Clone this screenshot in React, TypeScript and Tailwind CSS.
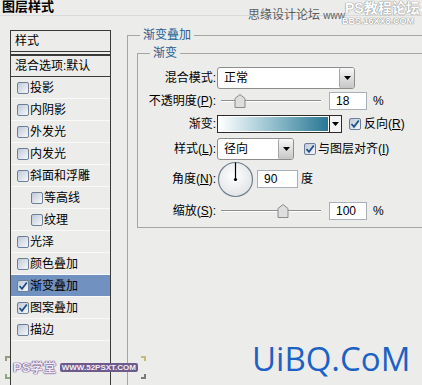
const items = [
  { label: "投影" },
  { label: "内阴影" },
  { label: "外发光" },
  { label: "内发光" },
  { label: "斜面和浮雕" },
  { label: "等高线", sub: true },
  { label: "纹理", sub: true },
  { label: "光泽" },
  { label: "颜色叠加" },
  { label: "渐变叠加", checked: true, active: true },
  { label: "图案叠加", checked: true },
  { label: "描边" },
];

function Check({ checked }: { checked?: boolean }) {
  return (
    <span className="flex h-[12px] w-[12px] shrink-0 items-center justify-center rounded-[2px] border border-[#6b7f99] bg-[linear-gradient(135deg,#bfc9d8,#f7f8fa)]">
      {checked && (
        <svg width="10" height="10" viewBox="0 0 10 10">
          <path d="M1.5 5 L4 7.8 L8.8 1.5" fill="none" stroke="#1d4f86" strokeWidth="1.8" />
        </svg>
      )}
    </span>
  );
}

function Arrow() {
  return (
    <svg width="7" height="4" viewBox="0 0 7 4">
      <path d="M0 0 H7 L3.5 4 Z" fill="#000" />
    </svg>
  );
}

function Select({ value, width }: { value: string; width: string }) {
  return (
    <div className={`flex h-[22px] ${width} items-stretch rounded-[3px] border border-[#8d8d8d] bg-white`}>
      <div className="flex-1 pl-[6px] leading-[20px]">{value}</div>
      <div className="flex w-[15px] items-center justify-center rounded-[2px] border-l border-[#a3a3a3] bg-[linear-gradient(#f8f8f8,#c6c6c6)]">
        <Arrow />
      </div>
    </div>
  );
}

function Slider({ pos }: { pos: number }) {
  return (
    <svg width="102" height="18" viewBox="0 0 102 18" className="ml-[3px] shrink-0">
      <line x1="1" y1="8.5" x2="101" y2="8.5" stroke="#8e8e8e" />
      <line x1="1" y1="9.5" x2="101" y2="9.5" stroke="#ffffff" />
      <path
        d={`M${pos} 2.5 L${pos + 5} 6.5 V15.5 H${pos - 5} V6.5 Z`}
        fill="#dedede"
        stroke="#8a8a8a"
      />
    </svg>
  );
}

function Num({ value }: { value: string }) {
  return (
    <div className="h-[18px] w-[38px] shrink-0 border border-[#a9b0b8] bg-white pl-[6px] leading-[16px]">
      {value}
    </div>
  );
}

function Label({ children }: { children: React.ReactNode }) {
  return <div className="w-[79px] shrink-0 pr-[1px] text-right">{children}</div>;
}

export default function App() {
  return (
    <div className="relative h-[385px] w-[422px] overflow-hidden bg-[#ececeb] font-['Liberation_Sans','Noto_Sans_CJK_SC',sans-serif] text-[12px] text-black">
      <div className="h-[16px] border-b border-[#d9d9d9] pl-[2px] text-[13px] font-bold leading-[14px]">图层样式</div>

      <div className="flex">
        {/* left list */}
        <div className="ml-[10px] mt-[14px] flex h-[360px] w-[101px] shrink-0 flex-col border-x border-[#3a3a3a]">
          <div className="h-[22px] border-y border-[#3a3a3a] pl-[4px] leading-[20px]">样式</div>
          <div className="mt-[2px] h-[23px] border-b border-t-2 border-[#3a3a3a] pl-[4px] leading-[20px]">混合选项:默认</div>
          {items.map((it) => (
            <div
              key={it.label}
              className={`flex h-[22px] items-center gap-[1px] border-b border-[#f9f9f9] ${it.sub ? "pl-[20px]" : "pl-[6px]"} ${it.active ? "bg-[#7191c0]" : ""}`}
            >
              <Check checked={it.checked} />
              <span className="text-[12px]">{it.label}</span>
            </div>
          ))}
        </div>

        {/* right options */}
        <fieldset className="ml-[16px] mt-[11px] h-[380px] w-[310px] min-w-0 shrink-0 border border-[#a5a5a5] pl-[9px]">
          <legend className="ml-[3px] px-[3px] leading-[16px] text-[#2a5d8f]">渐变叠加</legend>
          <fieldset className="mt-[2px] w-[300px] min-w-0 border border-[#a5a5a5] pb-[7px]">
            <legend className="ml-[12px] px-[3px] leading-[16px] text-[#2a5d8f]">渐变</legend>

            <div className="mt-[6px] flex h-[22px] items-center">
              <Label>混合模式:</Label>
              <Select value="正常" width="w-[138px]" />
            </div>

            <div className="mt-[3px] flex h-[18px] items-center">
              <Label>不透明度(<u>P</u>):</Label>
              <Slider pos={20} />
              <div className="ml-[7px]"><Num value="18" /></div>
              <span className="ml-[6px]">%</span>
            </div>

            <div className="mt-[5px] flex h-[18px] items-center">
              <Label>渐变:</Label>
              <div className="flex h-[18px] w-[125px] shrink-0 border border-[#2b2b2b] bg-white">
                <div className="m-[1px] flex-1 bg-[linear-gradient(to_right,#ffffff,#9cc5d2_45%,#2a7794)]" />
                <div className="flex w-[12px] items-center justify-center border-l border-[#2b2b2b] bg-[#f4f4f4]">
                  <Arrow />
                </div>
              </div>
              <div className="ml-[7px] flex items-center gap-[3px]">
                <Check checked />
                <span>反向(<u>R</u>)</span>
              </div>
            </div>

            <div className="mt-[5px] flex h-[22px] items-center">
              <Label>样式(<u>L</u>):</Label>
              <Select value="径向" width="w-[77px]" />
              <div className="ml-[10px] flex items-center gap-[2px]">
                <Check checked />
                <span>与图层对齐(<u>I</u>)</span>
              </div>
            </div>

            <div className="flex h-[38px] items-center">
              <Label>角度(<u>N</u>):</Label>
              <svg width="37" height="37" viewBox="0 0 37 37" className="shrink-0">
                <defs>
                  <radialGradient id="dial" cx="45%" cy="40%" r="60%">
                    <stop offset="0%" stopColor="#ffffff" />
                    <stop offset="100%" stopColor="#e2e4e7" />
                  </radialGradient>
                </defs>
                <circle cx="18.5" cy="18.5" r="17" fill="url(#dial)" stroke="#717f8e" strokeWidth="1.2" />
                <line x1="18.5" y1="18.5" x2="18.5" y2="1.5" stroke="#000" strokeWidth="1.2" />
                <circle cx="18.5" cy="18.5" r="1.6" fill="#000" />
              </svg>
              <div className="ml-[3px] h-[18px] w-[41px] border border-[#a9b0b8] bg-white pl-[6px] leading-[16px]">90</div>
              <span className="ml-[3px]">度</span>
            </div>

            <div className="mt-[4px] flex h-[18px] items-center">
              <Label>缩放(<u>S</u>):</Label>
              <Slider pos={63} />
              <div className="ml-[7px]"><Num value="100" /></div>
              <span className="ml-[6px]">%</span>
            </div>
          </fieldset>
        </fieldset>
      </div>

      {/* watermarks */}
      <div className="absolute left-[248px] top-[8px] text-[12px] leading-[14px] text-[#5c5c5c]">
        思缘设计论坛 <span className="text-[10px]">www.</span>
      </div>
      <div className="absolute left-[345px] top-[0px] text-[14px] font-bold leading-[16px] text-white [text-shadow:0_0_1px_#777,0_0_1px_#777]">
        PS教程论坛
      </div>
      <div className="absolute left-[342px] top-[16px] text-[9px] font-bold leading-[11px] text-white [text-shadow:0_0_1px_#777,0_0_1px_#777]">
        BBS.16XX8.COM
      </div>

      <div className="absolute left-[5px] top-[356px] flex h-[23px] w-[141px] items-center justify-between">
        <span className="absolute left-0 top-0 h-[5px] w-[5px] border-l-2 border-t-2 border-[#9a9a7a]" />
        <span className="absolute bottom-0 left-0 h-[5px] w-[5px] border-b-2 border-l-2 border-[#8ca87a]" />
        <span className="absolute right-0 top-0 h-[5px] w-[5px] border-r-2 border-t-2 border-[#c8b87a]" />
        <span className="absolute bottom-0 right-0 h-[5px] w-[5px] border-b-2 border-r-2 border-[#7a7a7a]" />
        <span className="ml-[8px] text-[13px] font-bold leading-[14px] text-[#efe8f6] [text-shadow:0_0_1px_#5a3f7c,0_0_1px_#5a3f7c,0_0_1px_#5a3f7c]">PS学堂</span>
        <span className="mr-[8px] rounded-[2px] bg-[#6f5a8c] px-[2px] text-[8px] font-bold leading-[9px] text-[#f3eefa]">WWW.52PSXT.COM</span>
      </div>

      <div className="absolute left-[252px] top-[341px] font-['Open_Sans',sans-serif] text-[33px] leading-[36px] text-[#1b62c4]">
        UiBQ.CoM
      </div>
    </div>
  );
}
